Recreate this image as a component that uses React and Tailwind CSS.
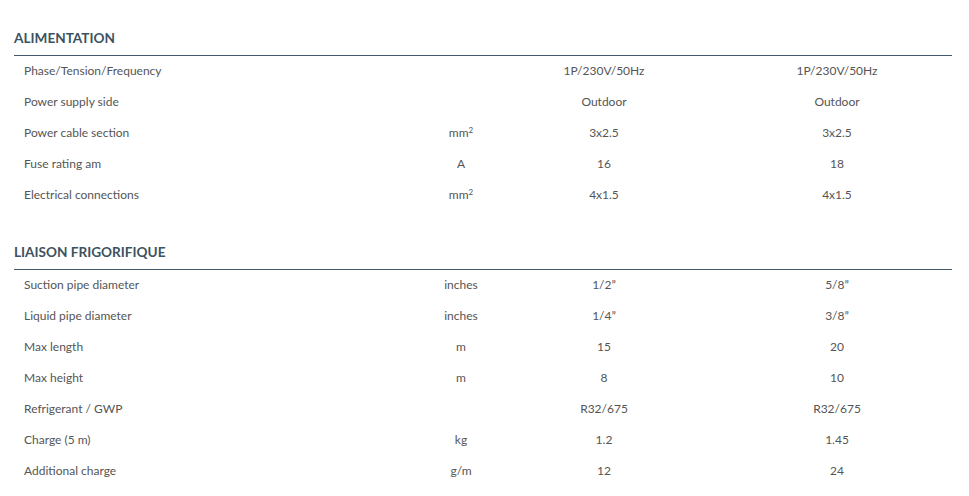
import React from "react";

const sections = [
  {
    title: "ALIMENTATION",
    gap: "pt-[28px]",
    rows: [
      ["Phase/Tension/Frequency", "", "1P/230V/50Hz", "1P/230V/50Hz"],
      ["Power supply side", "", "Outdoor", "Outdoor"],
      ["Power cable section", "mm2", "3x2.5", "3x2.5"],
      ["Fuse rating am", "A", "16", "18"],
      ["Electrical connections", "mm2", "4x1.5", "4x1.5"],
    ],
  },
  {
    title: "LIAISON FRIGORIFIQUE",
    gap: "pt-[31px]",
    rows: [
      ["Suction pipe diameter", "inches", "1/2\u201D", "5/8\u201D"],
      ["Liquid pipe diameter", "inches", "1/4\u201D", "3/8\u201D"],
      ["Max length", "m", "15", "20"],
      ["Max height", "m", "8", "10"],
      ["Refrigerant / GWP", "", "R32/675", "R32/675"],
      ["Charge (5 m)", "kg", "1.2", "1.45"],
      ["Additional charge", "g/m", "12", "24"],
    ],
  },
];

const Unit = ({ value }) => {
  if (value === "mm2") {
    return (
      <span>
        mm<sup className="text-[8px]">2</sup>
      </span>
    );
  }
  return <span>{value}</span>;
};

const App = () => {
  return (
    <div className="w-[969px] h-[496px] overflow-hidden bg-white font-['Lato',sans-serif]">
      <div className="pl-[14px] w-[952px]">
        {sections.map((section) => (
          <div key={section.title} className={section.gap}>
            <h2 className="text-[13.6px] leading-[20px] font-bold text-[#3d5260] pb-[7px] border-b border-[#43586a]">
              {section.title}
            </h2>
            <div>
              {section.rows.map((row) => (
                <div
                  key={row[0]}
                  className="grid grid-cols-[378px_138px_148px_1fr] h-[31px] pt-[1px] pb-[3px] items-center text-[12px] text-[#555555]"
                >
                  <div className="pl-[10px]">{row[0]}</div>
                  <div className="text-center">
                    <Unit value={row[1]} />
                  </div>
                  <div className="text-center">{row[2]}</div>
                  <div className="text-center pl-[44px]">{row[3]}</div>
                </div>
              ))}
            </div>
          </div>
        ))}
      </div>
    </div>
  );
};

export default App;
